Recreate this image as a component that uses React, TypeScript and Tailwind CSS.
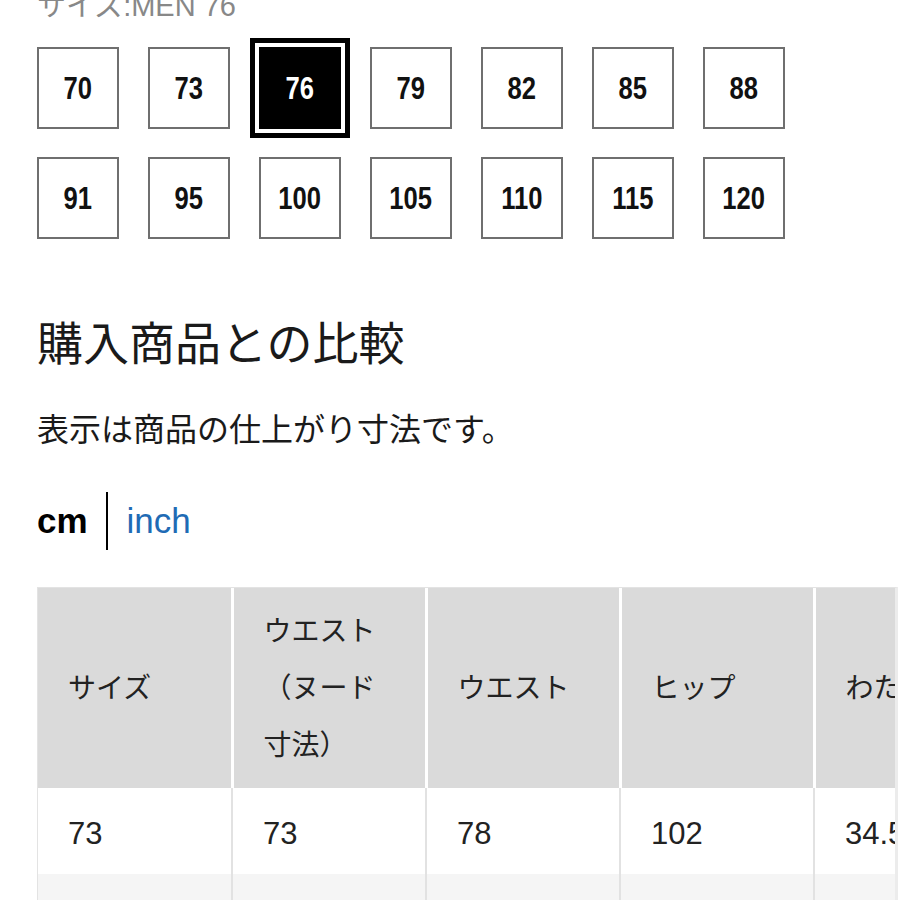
import React from 'react';

const sizes = ['70', '73', '76', '79', '82', '85', '88', '91', '95', '100', '105', '110', '115', '120'];
const selected = '76';

const headers = ['サイズ', 'ウエスト（ヌード寸法）', 'ウエスト', 'ヒップ', 'わたり'];
const rows = [
  ['73', '73', '78', '102', '34.5'],
  ['', '', '', '', ''],
];

export default function App() {
  return (
    <div className="w-[900px] h-[900px] overflow-hidden bg-white font-['Liberation_Sans','Noto_Sans_CJK_JP',sans-serif]">
      <div className="pl-[37px]">
        {/* 選択中のサイズ */}
        <p className="-mt-[8px] text-[29px] leading-[28px] text-[#888]">サイズ:MEN 76</p>

        <div className="mt-[27px] grid grid-cols-[repeat(7,82px)] gap-x-[29px] gap-y-[28px]">
          {sizes.map(s => {
            const active = s === selected;
            return (
              <div
                key={s}
                className={`h-[82px] w-[82px] flex items-center justify-center text-[32px] font-bold ${
                  active
                    ? 'bg-black text-white shadow-[0_0_0_4px_#fff,0_0_0_9px_#000]'
                    : 'border-2 border-[#6f6f6f] text-[#111]'
                }`}
              >
                <span className="inline-block scale-x-[0.8]">{s}</span>
              </div>
            );
          })}
        </div>

        {/* 比較 */}
        <h2 className="mt-[75px] text-[46px] leading-[52px] font-normal text-[#1a1a1a] font-['Noto_Sans_CJK_JP',sans-serif]">
          購入商品との比較
        </h2>
        <p className="mt-[41px] text-[32px] leading-[40px] text-[#1a1a1a] font-['Noto_Sans_CJK_JP',sans-serif]">
          表示は商品の仕上がり寸法です。
        </p>

        <div className="mt-[45px] flex items-center h-[58px] text-[35px]">
          <span className="font-bold text-black pr-[18px]">cm</span>
          <span className="w-[2px] h-[58px] bg-black" />
          <span className="pl-[19px] text-[#1f6bb5]">inch</span>
        </div>

        {/* サイズ表 */}
        <div className="mt-[37px] w-[861px] overflow-hidden border-l border-t border-[#e3e3e3] border-r-[3px] border-r-[#ececec]">
          <table className="border-collapse table-fixed w-[970px] text-[#222]">
            <thead>
              <tr className="bg-[#dadada] h-[200px]">
                {headers.map(h => (
                  <th
                    key={h}
                    className="w-[194px] border-r-[3px] border-white px-[30px] text-left align-middle text-[28px] leading-[57px] font-normal"
                  >
                    {h}
                  </th>
                ))}
              </tr>
            </thead>
            <tbody>
              {rows.map((r, i) => (
                <tr key={i} className={`h-[86px] ${i % 2 === 1 ? 'bg-[#f5f5f5]' : 'bg-white'}`}>
                  {r.map((c, j) => (
                    <td
                      key={j}
                      className="border-r-2 border-[#e2e2e2] px-[30px] pt-[6px] align-middle text-[31px]"
                    >
                      {c}
                    </td>
                  ))}
                </tr>
              ))}
            </tbody>
          </table>
        </div>
      </div>
    </div>
  );
}
